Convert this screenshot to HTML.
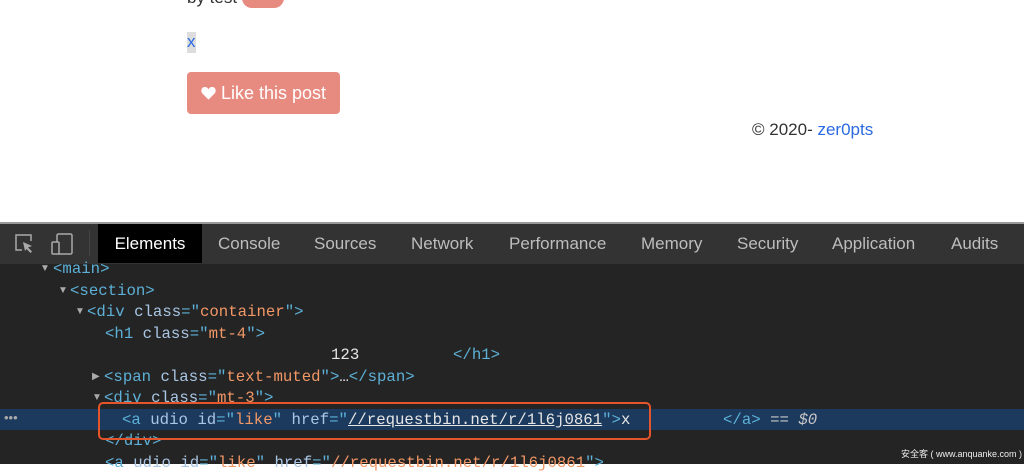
<!DOCTYPE html>
<html><head><style>
body{margin:0;width:1024px;height:464px;overflow:hidden;background:#fff;font-family:"Liberation Sans",sans-serif;position:relative}
.a{position:absolute}
.c{position:absolute;font-family:"Liberation Mono",monospace;font-size:15.7px;white-space:pre;color:#c8c8c8;line-height:20px}
.tr{position:absolute;font-size:10px;color:#aaa;line-height:20px}
.t{color:#5db0d7}.v{color:#f29766}.at{color:#a9c6e4}.w{color:#e6e6e6}
.tab{position:absolute;top:224px;height:39px;line-height:39px;font-size:17px;color:#bdbdbd}
</style></head><body>
<div class="a" style="left:187px;top:-12px;font-size:17px;color:#333">by test <span style="display:inline-block;background:#e78a80;color:#fff;border-radius:10px;padding:0 8px;width:26px">&nbsp;</span></div>
<div class="a" style="left:187px;top:32px;width:9px;height:21px;background:#ddd;color:#2a6ae0;font-size:17px;line-height:19px">x</div>
<div class="a" style="left:187px;top:72px;width:153px;height:42px;background:#e78a80;border-radius:4px;color:#fff;font-size:18px;line-height:42px;text-align:center">
<svg width="15" height="14" viewBox="0 0 16 14" style="vertical-align:-1px"><path d="M8 14 L1.5 7.5 C-0.5 5.5 0 1 3.8 0.6 C5.8 0.4 7.2 1.6 8 3 C8.8 1.6 10.2 0.4 12.2 0.6 C16 1 16.5 5.5 14.5 7.5 Z" fill="#fff"/></svg> Like this post</div>
<div class="a" style="left:752px;top:120px;font-size:17px;color:#333">© 2020- <span style="color:#2a6ae0">zer0pts</span></div>
<div class="a" style="left:0;top:222px;width:1024px;height:2px;background:#999"></div>
<div class="a" style="left:0;top:224px;width:1024px;height:40px;background:#333;border-bottom:1px solid #444"></div>
<svg class="a" style="left:14px;top:233px" width="22" height="22" viewBox="0 0 22 22"><path d="M8 17H2V2h15v6" fill="none" stroke="#aaa" stroke-width="1.5"/><path d="M9 9l9 4-4 1.5 4 4-1.5 1.5-4-4L11 18z" fill="#aaa"/></svg>
<svg class="a" style="left:50px;top:232px" width="24" height="24" viewBox="0 0 24 24"><rect x="7" y="2" width="15" height="20" rx="1.5" fill="none" stroke="#aaa" stroke-width="1.5"/><rect x="2" y="10" width="7" height="12" rx="1" fill="#333" stroke="#aaa" stroke-width="1.5"/></svg>
<div class="a" style="left:89px;top:230px;width:1px;height:26px;background:#444"></div>
<div class="tab" style="left:98px;width:104px;background:#000;color:#fff;text-align:center">Elements</div>
<div class="tab" style="left:218px">Console</div>
<div class="tab" style="left:314px">Sources</div>
<div class="tab" style="left:411px">Network</div>
<div class="tab" style="left:509px">Performance</div>
<div class="tab" style="left:641px">Memory</div>
<div class="tab" style="left:737px">Security</div>
<div class="tab" style="left:832px">Application</div>
<div class="tab" style="left:951px">Audits</div>
<div class="a" style="left:0;top:264px;width:1024px;height:200px;background:#242424"></div>
<div class="a" style="left:0;top:409px;width:1024px;height:21px;background:#1c3a5e"></div>

<div class="tr" style="left:40px;top:259px">▼</div><div class="c" style="left:53px;top:259px"><span class="t">&lt;main&gt;</span></div>
<div class="tr" style="left:58px;top:281px">▼</div><div class="c" style="left:70px;top:281px"><span class="t">&lt;section&gt;</span></div>
<div class="tr" style="left:75px;top:302px">▼</div><div class="c" style="left:87px;top:302px"><span class="t">&lt;div </span><span class="at">class</span><span class="t">="</span><span class="v">container</span><span class="t">"&gt;</span></div>
<div class="c" style="left:105px;top:324px"><span class="t">&lt;h1 </span><span class="at">class</span><span class="t">="</span><span class="v">mt-4</span><span class="t">"&gt;</span></div>
<div class="c" style="left:331px;top:345px"><span class="w">123</span></div>
<div class="c" style="left:453px;top:345px"><span class="t">&lt;/h1&gt;</span></div>
<div class="tr" style="left:92px;top:367px">▶</div><div class="c" style="left:104px;top:367px"><span class="t">&lt;span </span><span class="at">class</span><span class="t">="</span><span class="v">text-muted</span><span class="t">"&gt;</span><span class="w">…</span><span class="t">&lt;/span&gt;</span></div>
<div class="tr" style="left:92px;top:388px">▼</div><div class="c" style="left:104px;top:388px"><span class="t">&lt;div </span><span class="at">class</span><span class="t">="</span><span class="v">mt-3</span><span class="t">"&gt;</span></div>
<div class="c" style="left:122px;top:410px"><span class="t">&lt;a </span><span class="at">udio id</span><span class="t">="</span><span class="v">like</span><span class="t">" </span><span class="at">href</span><span class="t">="</span><span class="w" style="text-decoration:underline">//requestbin.net/r/1l6j0861</span><span class="t">"&gt;</span><span class="w">x</span></div>
<div class="c" style="left:723px;top:410px"><span class="t">&lt;/a&gt;</span> == <i>$0</i></div>
<div class="c" style="left:105px;top:431px"><span class="t">&lt;/div&gt;</span></div>
<div class="c" style="left:105px;top:453px"><span class="t">&lt;a </span><span class="at">udio id</span><span class="t">="</span><span class="v">like</span><span class="t">" </span><span class="at">href</span><span class="t">="</span><span class="v">//requestbin.net/r/1l6j0861</span><span class="t">"&gt;</span></div>
<div class="a" style="left:4px;top:410px;color:#aaa;font-size:13px">•••</div>
<div class="a" style="left:98px;top:402px;width:549px;height:34px;border:2px solid #e4552b;border-radius:5px"></div>
<div class="a" style="left:901px;top:447px;font-size:9px;color:#eee;white-space:nowrap;font-family:'Liberation Sans','Noto Sans CJK SC',sans-serif">安全客 ( www.anquanke.com )</div>
</body></html>
